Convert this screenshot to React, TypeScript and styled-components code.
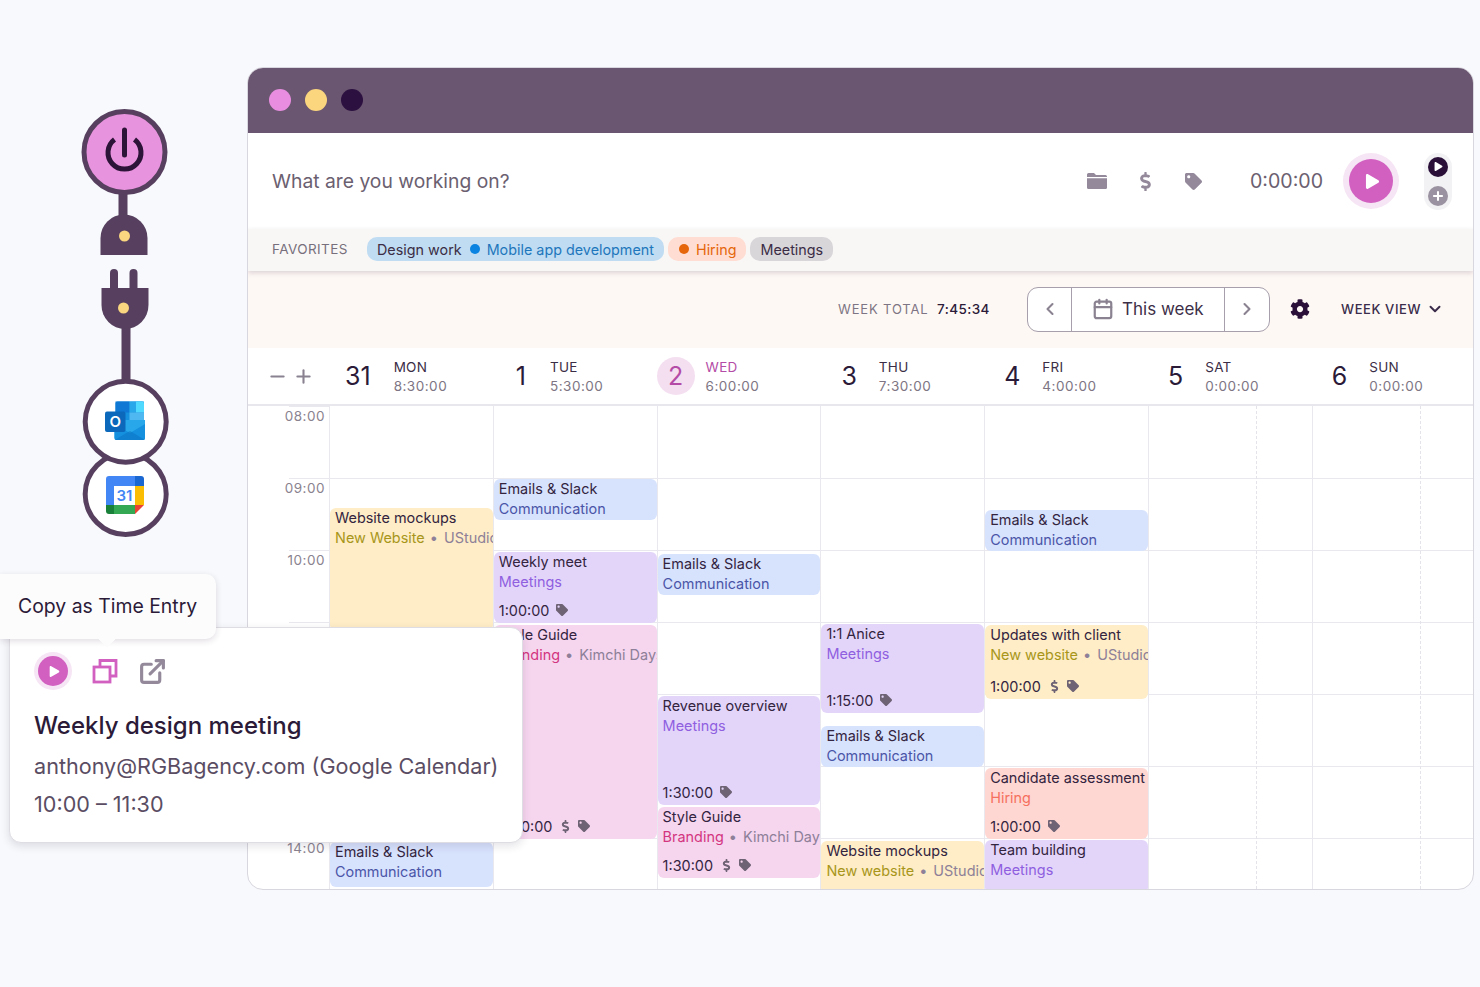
import styled, { createGlobalStyle } from 'styled-components'
import { FaDollarSign, FaTag, FaCog, FaPlay } from 'react-icons/fa'
import { ChevronLeft, ChevronRight, ChevronDown, Calendar, ExternalLink, Minus, Plus } from 'lucide-react'

const GlobalStyle = createGlobalStyle`
    html, body { margin: 0; padding: 0; background: #f7f9fc; }
    * { box-sizing: border-box; }
    body { font-family: Inter, "Noto Sans", "Liberation Sans", sans-serif; color: #2b1a38; }
`

const Page = styled.div`
    position: relative;
    width: 1480px;
    height: 987px;
    overflow: hidden;
    display: flex;
    align-items: flex-start;
    padding-top: 67px;
`

const Rail = styled.div`
    width: 247px;
    flex: none;
    padding: 38px 0 0 78px;
    svg { display: block; }
`

const Win = styled.div`
    width: 1227px;
    height: 823px;
    flex: none;
    display: flex;
    flex-direction: column;
    background: #fff;
    border: 1px solid #d8d6de;
    border-radius: 16px;
    overflow: hidden;
`

const TitleBar = styled.div`
    height: 65px;
    flex: none;
    display: flex;
    align-items: center;
    gap: 14px;
    padding: 0 0 1px 21px;
    background: #6a5670;
`

const Light = styled.span<{ $color: string }>`
    width: 22px;
    height: 22px;
    border-radius: 50%;
    background: ${p => p.$color};
`

const TimerRow = styled.div`
    height: 96px;
    flex: none;
    display: flex;
    align-items: center;
    padding: 0 21px 0 24px;
    background: #fff;
`

const Placeholder = styled.div`
    flex: 1;
    font-size: 19.3px;
    color: #6b6070;
`

const TimerIcon = styled.span`
    display: flex;
    justify-content: center;
    width: 24px;
    color: #93899b;
    margin-right: 24px;
`

const Clock = styled.div`
    margin-left: 21px;
    font-size: 19.6px;
    color: #6b6070;
    width: 73px;
`

const PlayHalo = styled.div`
    width: 56px;
    height: 56px;
    margin-left: 20px;
    border-radius: 50%;
    background: #f6e5f4;
    display: flex;
    align-items: center;
    justify-content: center;
`

const PlayDisc = styled.div<{ $size: number }>`
    width: ${p => p.$size}px;
    height: ${p => p.$size}px;
    border-radius: 50%;
    background: #d160c0;
    color: #fff;
    display: flex;
    align-items: center;
    justify-content: center;
    svg { margin-left: 2px; }
`

const SideSwitch = styled.div`
    width: 28px;
    height: 57px;
    margin-left: 25px;
    border-radius: 14px;
    background: #f2f1f4;
    display: flex;
    flex-direction: column;
    align-items: center;
    justify-content: center;
    gap: 9px;
`

const SideDot = styled.span<{ $dark?: boolean }>`
    width: 20px;
    height: 20px;
    border-radius: 50%;
    background: ${p => (p.$dark ? '#2a1038' : '#9a92a0')};
    color: #fff;
    display: flex;
    align-items: center;
    justify-content: center;
`

const FavoritesRow = styled.div`
    height: 42px;
    flex: none;
    display: flex;
    align-items: center;
    padding: 0 0 2px 24px;
    gap: 4px;
    background: #f9f7f6;
    box-shadow: 0 2px 5px rgba(60, 40, 70, 0.18);
    position: relative;
`

const FavLabel = styled.span`
    font-size: 13.5px;
    letter-spacing: 0.4px;
    color: #77707c;
    width: 91px;
`

const Chip = styled.span<{ $bg: string }>`
    height: 24px;
    display: flex;
    align-items: center;
    gap: 7px;
    padding: 0 10px;
    border-radius: 10px;
    font-size: 14.35px;
    white-space: nowrap;
    color: #3b2d45;
    background: ${p => p.$bg};
`

const ChipDot = styled.i<{ $color: string }>`
    width: 10px;
    height: 10px;
    border-radius: 50%;
    margin-left: 1px;
    background: ${p => p.$color};
`

const ChipProject = styled.span<{ $color: string }>`
    color: ${p => p.$color};
`

const WeekBar = styled.div`
    height: 77px;
    flex: none;
    display: flex;
    align-items: center;
    padding: 0 0 1px 590px;
    background: #fef8f5;
`

const WeekLabel = styled.span`
    font-size: 13px;
    letter-spacing: 0.85px;
    color: #7d7583;
    width: 99px;
`

const WeekValue = styled.span`
    font-size: 13.5px;
    font-weight: 500;
    letter-spacing: 0.4px;
    color: #2b1a38;
    width: 90px;
`

const NavGroup = styled.div`
    width: 243px;
    height: 45px;
    display: flex;
    background: #fff;
    border: 1px solid #a79fac;
    border-radius: 11px;
`

const NavArrow = styled.div<{ $w: number }>`
    width: ${p => p.$w}px;
    display: flex;
    align-items: center;
    justify-content: center;
    color: #8a8290;
`

const NavCenter = styled.div`
    flex: 1;
    display: flex;
    align-items: center;
    gap: 8px;
    padding-left: 20px;
    border-left: 1px solid #a79fac;
    border-right: 1px solid #a79fac;
    font-size: 17px;
    color: #3d2f48;
    svg { color: #8a8290; }
`

const GearWrap = styled.div`
    margin-left: 20px;
    display: flex;
    color: #2a1038;
`

const ViewSelect = styled.div`
    margin-left: 31px;
    display: flex;
    align-items: center;
    gap: 5px;
    font-size: 13px;
    font-weight: 500;
    letter-spacing: 0.6px;
    color: #3a2c4a;
`

const DayHeader = styled.div`
    height: 58px;
    flex: none;
    display: flex;
    align-items: center;
    background: #fff;
    border-bottom: 2px solid #e8e7ee;
`

const ZoomControls = styled.div`
    width: 81px;
    flex: none;
    display: flex;
    gap: 5px;
    padding-left: 19px;
    color: #8a8290;
`

const DayCell = styled.div<{ $pad: number; $gap: number }>`
    width: 163.8px;
    flex: none;
    display: flex;
    align-items: center;
    gap: ${p => p.$gap}px;
    padding-left: ${p => p.$pad}px;
`

const DayNum = styled.span<{ $today?: boolean }>`
    font-size: 25px;
    text-align: center;
    ${p => (p.$today
        ? 'width: 38px; height: 38px; line-height: 38px; border-radius: 50%; background: #f4dff1; color: #b44ba6;'
        : 'color: #2b1a38;')}
`

const DayInfo = styled.div<{ $today?: boolean }>`
    display: flex;
    flex-direction: column;
    gap: 2px;
    padding-top: 2px;
    font-size: 13.5px;
    line-height: 17px;
    letter-spacing: 0.3px;
    b {
        font-weight: 400;
        color: ${p => (p.$today ? '#b44ba6' : '#3b2d45')};
    }
    span { color: #7d7583; letter-spacing: 0.5px; }
`

const Grid = styled.div`
    flex: 1;
    display: flex;
    min-height: 0;
`

const Gutter = styled.div`
    width: 81px;
    flex: none;
    background-image: linear-gradient(
        to bottom,
        transparent 0,
        transparent 71px,
        #e9e8ee 71px,
        #e9e8ee 72px
    );
    background-size: 40px 72px;
    background-position: right 1px;
    background-repeat: repeat-y;
`

const TimeLabel = styled.div`
    height: 72px;
    padding: 2px 4px 0 0;
    text-align: right;
    font-size: 13.5px;
    line-height: 17px;
    letter-spacing: 0.5px;
    color: #8a838f;
`

const DayColumn = styled.div<{ $dashed?: boolean }>`
    position: relative;
    width: 163.8px;
    flex: none;
    border-left: 1px solid #e9e8ee;
    background-image: repeating-linear-gradient(
        to bottom,
        transparent 0,
        transparent 71px,
        #e9e8ee 71px,
        #e9e8ee 72px
    );
    background-position: 0 1px;
    ${p => p.$dashed && `
        &::after {
            content: '';
            position: absolute;
            top: 0;
            bottom: 0;
            right: 55px;
            border-right: 1px dashed #e4e3ea;
        }
    `}
`

const EventCard = styled.div<{ $bg: string }>`
    position: absolute;
    left: 0;
    right: 0;
    z-index: 1;
    display: flex;
    flex-direction: column;
    padding: 0 0 3px 5px;
    border-radius: 6px;
    overflow: hidden;
    white-space: nowrap;
    font-size: 14.45px;
    line-height: 19.5px;
    color: #33243f;
    background: ${p => p.$bg};
`

const EventSub = styled.div<{ $color: string }>`
    color: ${p => p.$color};
    i {
        font-style: normal;
        color: #8d8098;
        margin-left: 5px;
    }
`

const ClientName = styled.span`
    margin-left: 6px;
`

const EventFoot = styled.div`
    margin-top: auto;
    display: flex;
    align-items: center;
    gap: 6px;
    color: #33243f;
    svg { color: #6e6275; }
    span { margin-right: 1px; }
`

const Tooltip = styled.div`
    position: absolute;
    left: 0;
    top: 574px;
    width: 216px;
    height: 65px;
    z-index: 4;
    display: flex;
    align-items: center;
    padding: 0 0 1px 18px;
    border-radius: 0 10px 10px 0;
    font-size: 19.4px;
    color: #2b1a38;
    background: #fcfcfd;
    box-shadow: 0 2px 6px rgba(60, 40, 70, 0.16);
    &::after {
        content: '';
        position: absolute;
        left: 100px;
        bottom: -6px;
        width: 14px;
        height: 14px;
        background: #fcfcfd;
        transform: rotate(45deg);
        clip-path: polygon(100% 0, 100% 100%, 0 100%);
    }
`

const Popover = styled.div`
    position: absolute;
    left: 9px;
    top: 627px;
    width: 514px;
    height: 216px;
    z-index: 3;
    padding: 23px 0 0 24px;
    background: #fff;
    border: 1px solid #dedde3;
    border-radius: 12px;
    box-shadow: 0 3px 8px rgba(60, 40, 70, 0.14);
`

const PopActions = styled.div`
    height: 40px;
    display: flex;
    align-items: center;
    gap: 20px;
`

const PopHalo = styled.div`
    width: 38px;
    height: 38px;
    border-radius: 50%;
    background: #f6e5f4;
    display: flex;
    align-items: center;
    justify-content: center;
`

const PopTitle = styled.div`
    margin-top: 20px;
    font-size: 24px;
    line-height: 30px;
    font-weight: 500;
    color: #2b1a38;
`

const PopLine = styled.div<{ $gap: number }>`
    margin-top: ${p => p.$gap}px;
    font-size: 21.6px;
    line-height: 28px;
    color: #5a4d63;
`

const days = [
    { num: '31', name: 'MON', total: '8:30:00', pad: 16, gap: 23 },
    { num: '1', name: 'TUE', total: '5:30:00', pad: 23, gap: 24 },
    { num: '2', name: 'WED', total: '6:00:00', pad: 0, gap: 11, today: true },
    { num: '3', name: 'THU', total: '7:30:00', pad: 21, gap: 22 },
    { num: '4', name: 'FRI', total: '4:00:00', pad: 20, gap: 22 },
    { num: '5', name: 'SAT', total: '0:00:00', pad: 20, gap: 22 },
    { num: '6', name: 'SUN', total: '0:00:00', pad: 20, gap: 22 },
]

const kinds = {
    comm: { bg: '#d7e2fd', sub: '#4a55a8' },
    meet: { bg: '#e3d5fa', sub: '#8f5fe0' },
    site: { bg: '#feedc6', sub: '#a8961a' },
    brand: { bg: '#f6d5ef', sub: '#d3367f' },
    hire: { bg: '#ffd7d2', sub: '#f5705f' },
}

type CalEvent = {
    start: number
    end: number
    title: string
    kind: keyof typeof kinds
    sub: string
    client?: string
    time?: string
    money?: boolean
}

const emails = (start: number): CalEvent => ({
    start, end: start + 41, title: 'Emails & Slack', kind: 'comm', sub: 'Communication',
})

// start and end are page y positions of the event
const events: CalEvent[][] = [
    [
        { start: 507, end: 630, title: 'Website mockups', kind: 'site', sub: 'New Website', client: 'UStudio' },
        { ...emails(841), end: 886 },
    ],
    [
        emails(478),
        { start: 551, end: 622, title: 'Weekly meet', kind: 'meet', sub: 'Meetings', time: '1:00:00' },
        { start: 624, end: 838, title: 'Style Guide', kind: 'brand', sub: 'Branding', client: 'Kimchi Days', time: '3:00:00', money: true },
    ],
    [
        emails(553),
        { start: 695, end: 804, title: 'Revenue overview', kind: 'meet', sub: 'Meetings', time: '1:30:00' },
        { start: 806, end: 877, title: 'Style Guide', kind: 'brand', sub: 'Branding', client: 'Kimchi Days', time: '1:30:00', money: true },
    ],
    [
        { start: 623, end: 712, title: '1:1 Anice', kind: 'meet', sub: 'Meetings', time: '1:15:00' },
        { ...emails(725), end: 766 },
        { start: 840, end: 892, title: 'Website mockups', kind: 'site', sub: 'New website', client: 'UStudio' },
    ],
    [
        emails(509),
        { start: 624, end: 698, title: 'Updates with client', kind: 'site', sub: 'New website', client: 'UStudio', time: '1:00:00', money: true },
        { start: 767, end: 838, title: 'Candidate assessment', kind: 'hire', sub: 'Hiring', time: '1:00:00' },
        { start: 839, end: 892, title: 'Team building', kind: 'meet', sub: 'Meetings' },
    ],
    [],
    [],
]

const hours = ['08:00', '09:00', '10:00', '11:00', '12:00', '13:00', '14:00']
const gridTop = 405

const PlugArt = () => (
    <svg width="100" height="440" viewBox="78 105 100 440">
        <g fill="#57405f">
            <rect x="118.5" y="190" width="9" height="30" />
            <path d="M100.5 255 V238 A23.5 23.5 0 0 1 147.5 238 V255 Z" />
            <rect x="110" y="269" width="8" height="26" rx="4" />
            <rect x="129.5" y="269" width="8" height="26" rx="4" />
            <path d="M101.5 288 H148.5 V305 A23.5 24 0 0 1 101.5 305 Z" />
            <rect x="121.5" y="325" width="9" height="60" />
        </g>
        <circle cx="124.5" cy="236" r="5.5" fill="#f9d67f" />
        <circle cx="123.5" cy="308" r="5.5" fill="#f9d67f" />
        <circle cx="124.5" cy="152" r="40.5" fill="#e893dd" stroke="#57405f" strokeWidth="5" />
        <path d="M114.5 139.5 A16.5 16.5 0 1 0 134.5 139.5" fill="none" stroke="#2c1338" strokeWidth="5" />
        <path d="M124.5 130 V155" fill="none" stroke="#2c1338" strokeWidth="5" strokeLinecap="round" />

        <circle cx="125.7" cy="494" r="40.5" fill="#fff" stroke="#57405f" strokeWidth="5" />
        <rect x="114" y="486" width="21" height="19" fill="#fff" />
        <path d="M109 476 H135 V486 H114 V505 H106 V479 A3 3 0 0 1 109 476 Z" fill="#4285f4" />
        <path d="M135 476 H141 A3 3 0 0 1 144 479 V486 H135 Z" fill="#1a67d2" />
        <rect x="135" y="486" width="9" height="19" fill="#fbbc04" />
        <rect x="114" y="505" width="21" height="9" fill="#34a853" />
        <path d="M106 505 H114 V514 H109 A3 3 0 0 1 106 511 Z" fill="#188038" />
        <path d="M135 505 H144 L135 514 Z" fill="#ea4335" />
        <text x="124.5" y="501" textAnchor="middle" fontSize="15" fontWeight="600" fontFamily="Inter, sans-serif" fill="#4285f4">31</text>

        <circle cx="125.7" cy="421.7" r="40.5" fill="#fff" stroke="#57405f" strokeWidth="5" />
        <rect x="115.5" y="401.5" width="28.5" height="24" rx="2" fill="#1490df" />
        <rect x="115.5" y="401.5" width="14" height="11" fill="#0f78d4" />
        <rect x="129.5" y="401.5" width="14.5" height="11" fill="#28a8ea" />
        <path d="M136 401.5 H142 A2 2 0 0 1 144 403.5 V412.5 H136 Z" fill="#50d9ff" />
        <rect x="129.5" y="412.5" width="14.5" height="10" fill="#50b8f0" />
        <path d="M114.5 420 L145 420 V438 A2 2 0 0 1 143 440 H116.5 A2 2 0 0 1 114.5 438 Z" fill="#28a8ea" />
        <path d="M114.5 424 L130 433 L145 424 V438 A2 2 0 0 1 143 440 H116.5 A2 2 0 0 1 114.5 438 Z" fill="#1490df" />
        <path d="M114.5 440 L130 431 L145 440 Z" fill="#0a6fc0" opacity="0.5" />
        <rect x="105" y="411.5" width="20.5" height="20.5" rx="2" fill="#0b68bb" />
        <text x="115.3" y="427" textAnchor="middle" fontSize="15" fontWeight="600" fontFamily="Inter, sans-serif" fill="#fff">O</text>
    </svg>
)

const FolderIcon = () => (
    <svg width="20" height="16" viewBox="0 0 20 16" fill="currentColor">
        <path d="M1.5 0 H7 L9 2 H18.5 A1.5 1.5 0 0 1 20 3.5 V4 H0 V1.5 A1.5 1.5 0 0 1 1.5 0 Z" />
        <path d="M0 5.2 H20 V14.5 A1.5 1.5 0 0 1 18.5 16 H1.5 A1.5 1.5 0 0 1 0 14.5 Z" />
    </svg>
)

const CopyIcon = () => (
    <svg width="26" height="26" viewBox="0 0 26 26" fill="none" stroke="#d160c0" strokeWidth="2.8">
        <rect x="2" y="9" width="16" height="15" />
        <path d="M8 8 V2.5 H24 V18 H19" />
    </svg>
)

const App = () => {
    return <>
        <GlobalStyle />
        <Page>
            <Rail>
                <PlugArt />
            </Rail>
            <Win>
                <TitleBar>
                    <Light $color="#e88de0" />
                    <Light $color="#fbd67e" />
                    <Light $color="#2c1040" />
                </TitleBar>
                <TimerRow>
                    <Placeholder>What are you working on?</Placeholder>
                    <TimerIcon><FolderIcon /></TimerIcon>
                    <TimerIcon><FaDollarSign size={19} /></TimerIcon>
                    <TimerIcon><FaTag size={17} /></TimerIcon>
                    <Clock>0:00:00</Clock>
                    <PlayHalo>
                        <PlayDisc $size={44}><FaPlay size={15} /></PlayDisc>
                    </PlayHalo>
                    <SideSwitch>
                        <SideDot $dark><FaPlay size={9} /></SideDot>
                        <SideDot><Plus size={14} strokeWidth={3.5} /></SideDot>
                    </SideSwitch>
                </TimerRow>
                <FavoritesRow>
                    <FavLabel>FAVORITES</FavLabel>
                    <Chip $bg="#bfdcf2">
                        Design work
                        <ChipDot $color="#0b83e0" />
                        <ChipProject $color="#1e77bc">Mobile app development</ChipProject>
                    </Chip>
                    <Chip $bg="#ffddd2">
                        <ChipDot $color="#e5660b" />
                        <ChipProject $color="#e5660b">Hiring</ChipProject>
                    </Chip>
                    <Chip $bg="#d9d6da">Meetings</Chip>
                </FavoritesRow>
                <WeekBar>
                    <WeekLabel>WEEK TOTAL</WeekLabel>
                    <WeekValue>7:45:34</WeekValue>
                    <NavGroup>
                        <NavArrow $w={43}><ChevronLeft size={20} strokeWidth={2.5} /></NavArrow>
                        <NavCenter>
                            <Calendar size={22} strokeWidth={2.4} />
                            This week
                        </NavCenter>
                        <NavArrow $w={44}><ChevronRight size={20} strokeWidth={2.5} /></NavArrow>
                    </NavGroup>
                    <GearWrap><FaCog size={20} /></GearWrap>
                    <ViewSelect>
                        WEEK VIEW
                        <ChevronDown size={18} strokeWidth={2.6} />
                    </ViewSelect>
                </WeekBar>
                <DayHeader>
                    <ZoomControls>
                        <Minus size={21} strokeWidth={2.4} />
                        <Plus size={21} strokeWidth={2.4} />
                    </ZoomControls>
                    {days.map(d => (
                        <DayCell key={d.name} $pad={d.pad} $gap={d.gap}>
                            <DayNum $today={d.today}>{d.num}</DayNum>
                            <DayInfo $today={d.today}>
                                <b>{d.name}</b>
                                <span>{d.total}</span>
                            </DayInfo>
                        </DayCell>
                    ))}
                </DayHeader>
                <Grid>
                    <Gutter>
                        {hours.map(h => <TimeLabel key={h}>{h}</TimeLabel>)}
                    </Gutter>
                    {events.map((list, i) => (
                        <DayColumn key={i} $dashed={i >= 5}>
                            {list.map(ev => (
                                <EventCard
                                    key={ev.title + ev.start}
                                    $bg={kinds[ev.kind].bg}
                                    style={{ top: ev.start - gridTop, height: ev.end - ev.start }}
                                >
                                    <div>{ev.title}</div>
                                    <EventSub $color={kinds[ev.kind].sub}>
                                        {ev.sub}
                                        {ev.client && <i>•<ClientName>{ev.client}</ClientName></i>}
                                    </EventSub>
                                    {ev.time && (
                                        <EventFoot>
                                            <span>{ev.time}</span>
                                            {ev.money && <FaDollarSign size={13} />}
                                            <FaTag size={12} />
                                        </EventFoot>
                                    )}
                                </EventCard>
                            ))}
                        </DayColumn>
                    ))}
                </Grid>
            </Win>
            <Tooltip>Copy as Time Entry</Tooltip>
            <Popover>
                <PopActions>
                    <PopHalo>
                        <PlayDisc $size={30}><FaPlay size={11} /></PlayDisc>
                    </PopHalo>
                    <CopyIcon />
                    <ExternalLink size={29} color="#93899b" strokeWidth={2.6} />
                </PopActions>
                <PopTitle>Weekly design meeting</PopTitle>
                <PopLine $gap={11}>anthony@RGBagency.com (Google Calendar)</PopLine>
                <PopLine $gap={10}>10:00 – 11:30</PopLine>
            </Popover>
        </Page>
    </>
}

export default App
